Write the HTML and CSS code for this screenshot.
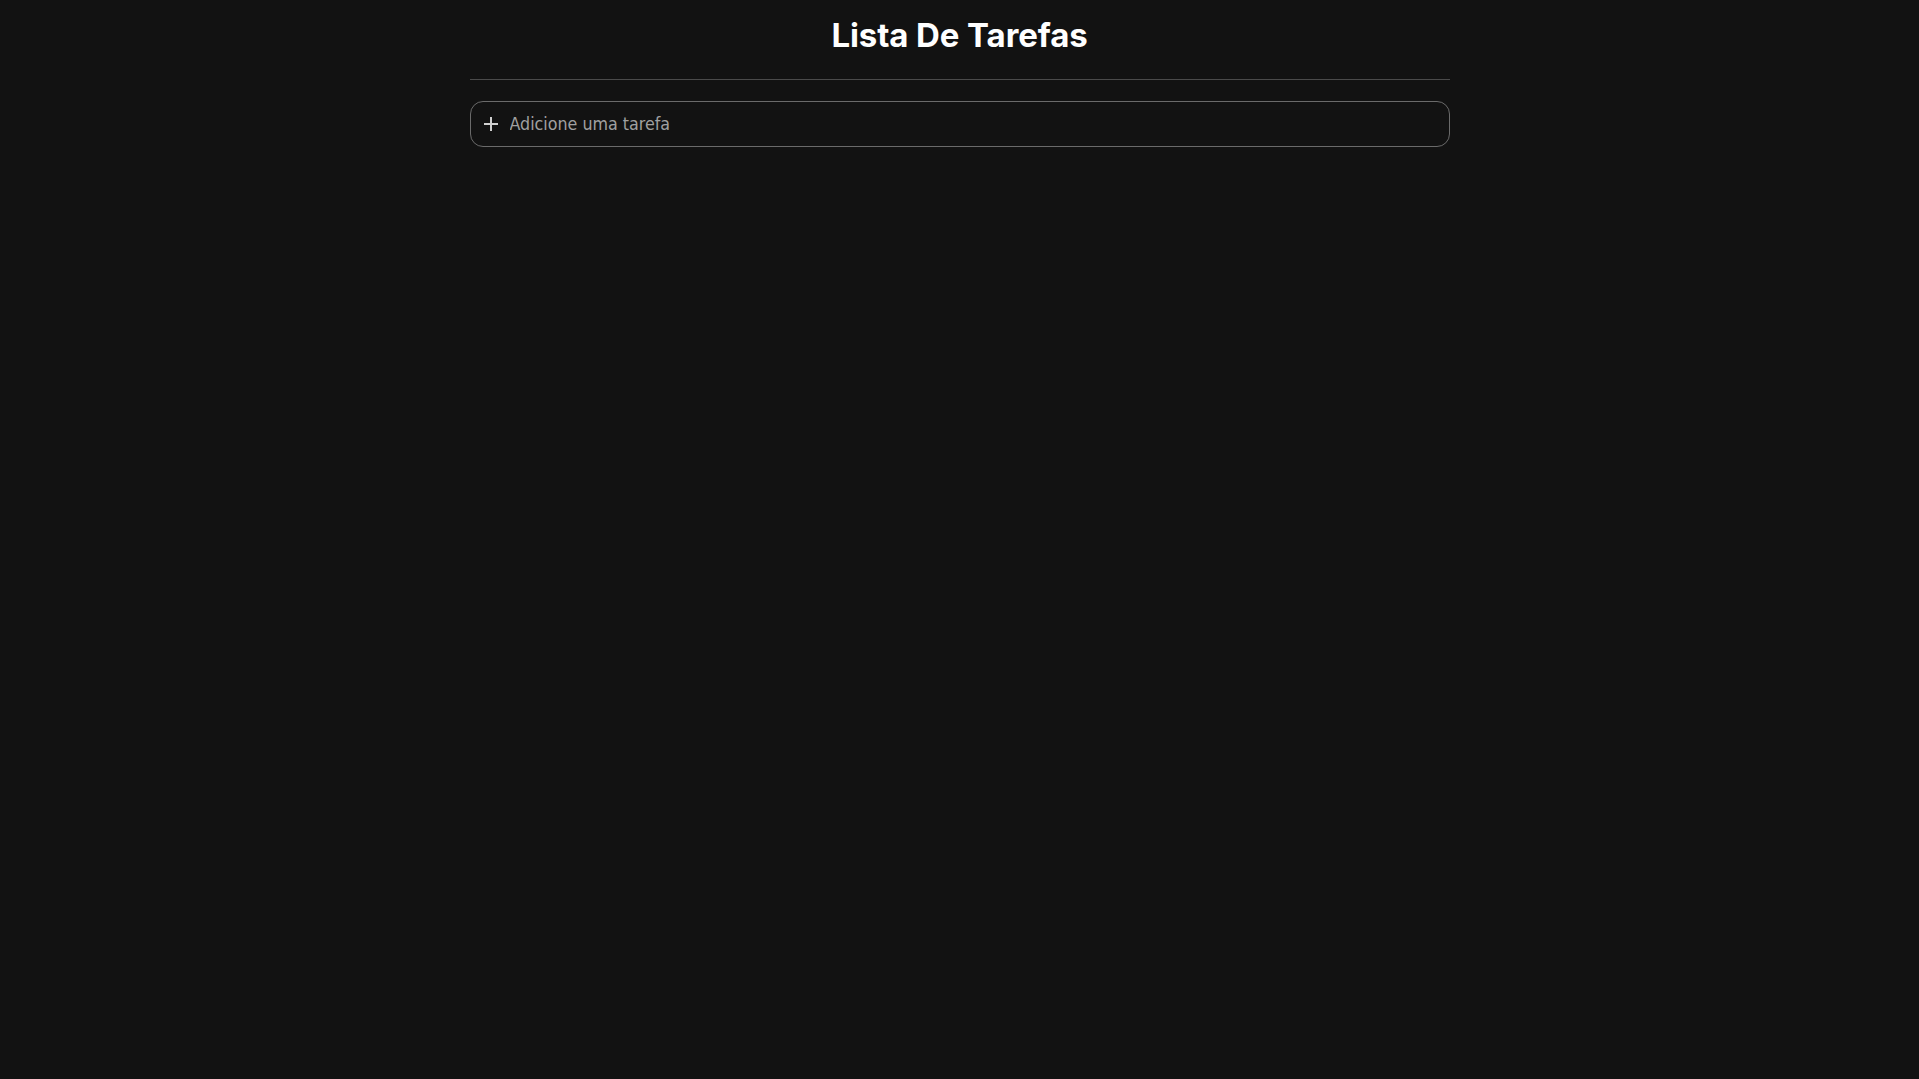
FILE: index.html
```html
<!DOCTYPE html>
<html lang="pt">
<head>
<meta charset="utf-8">
<title>Lista De Tarefas</title>
<link rel="stylesheet" href="styles.css">
</head>
<body>
<main class="app">
  <h1 class="title">Lista De Tarefas</h1>
  <div class="divider"></div>
  <label class="add-task">
    <svg class="plus" width="16" height="16" viewBox="0 0 16 16" aria-hidden="true">
      <path d="M8 1v14M1 8h14" stroke="#d0d0d0" stroke-width="2" fill="none"/>
    </svg>
    <input class="add-input" type="text" placeholder="Adicione uma tarefa">
  </label>
</main>
</body>
</html>
```
FILE: styles.css
```css
html, body {
  margin: 0;
  padding: 0;
  background: #121212;
  height: 100%;
}

.app {
  width: 980px;
  margin: 0 auto;
  display: flex;
  flex-direction: column;
}

.title {
  margin: 0;
  padding-top: 11px;
  height: 69px;
  box-sizing: border-box;
  text-align: center;
  font-family: Inter, "Noto Sans", sans-serif;
  font-weight: 700;
  font-size: 33px;
  line-height: 48px;
  color: #ffffff;
  letter-spacing: -0.1px;
}

.divider {
  height: 1px;
  background: #4a4a4a;
  margin-top: 10px;
}

.add-task {
  margin-top: 21px;
  height: 46px;
  box-sizing: border-box;
  border: 1px solid #6a6a6a;
  border-radius: 13px;
  display: flex;
  align-items: center;
  padding-left: 12px;
  gap: 11px;
}

.plus {
  flex: none;
}

.add-input {
  flex: 1;
  border: none;
  outline: none;
  background: transparent;
  padding: 0;
  font-family: "DejaVu Sans Condensed", "DejaVu Sans", sans-serif;
  font-size: 17.7px;
  color: #e0e0e0;
}

.add-input::placeholder {
  color: #a0a0a0;
}
```
